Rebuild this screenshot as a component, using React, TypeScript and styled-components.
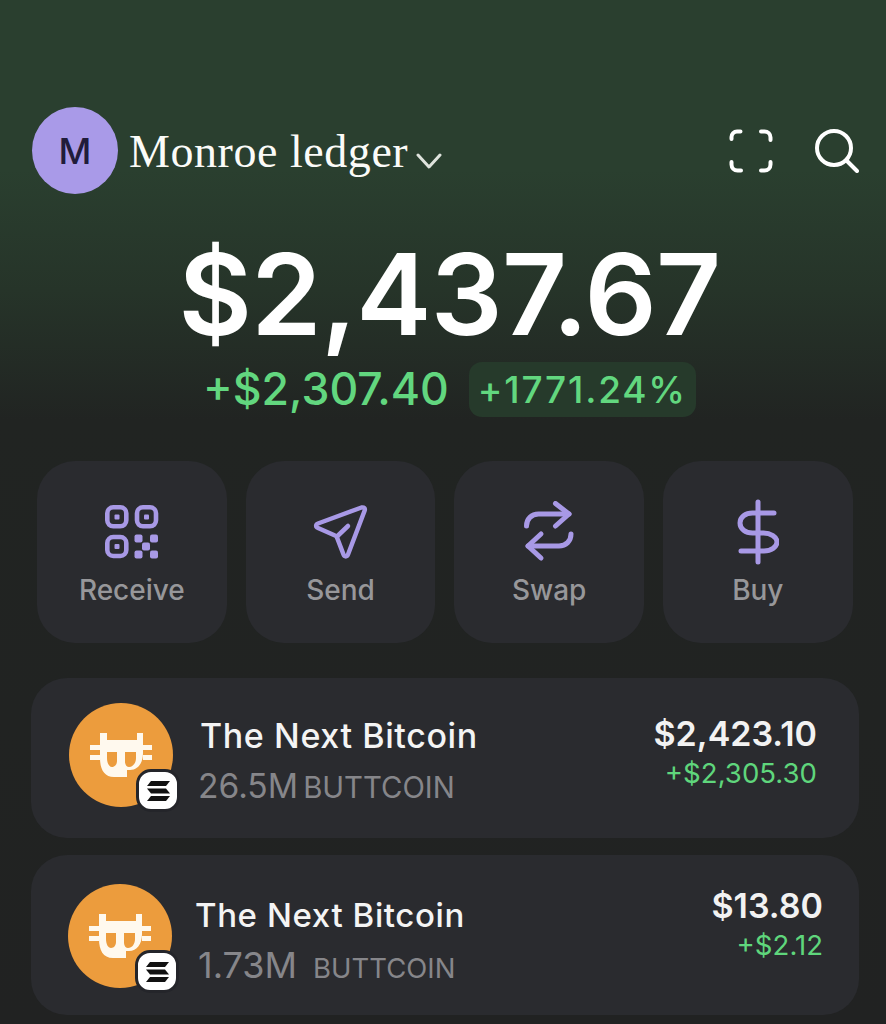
import React from "react";
import styled, { createGlobalStyle } from "styled-components";

const Global = createGlobalStyle`
  html, body { margin: 0; padding: 0; background: #212222; }
  * { box-sizing: border-box; }
`;

const Screen = styled.div`
  width: 886px;
  height: 1024px;
  overflow: hidden;
  font-family: Inter, "Liberation Sans", sans-serif;
  background: linear-gradient(180deg, #2a3f2f 0px, #2a3f2f 170px, #263429 290px, #212422 420px, #212222 1024px);
`;

const Header = styled.header`
  height: 194px;
  padding: 107px 27px 0 32px;
  display: flex;
  align-items: flex-start;
  justify-content: space-between;
`;

const Account = styled.div`
  display: flex;
  align-items: center;
`;

const Avatar = styled.div`
  width: 86px;
  height: 87px;
  border-radius: 50%;
  background: #a99ae8;
  color: #211c3a;
  font-size: 36px;
  font-weight: 500;
  display: flex;
  align-items: center;
  justify-content: center;
`;

const AccountName = styled.div`
  margin: 3px 0 0 11px;
  font-family: "Liberation Serif", serif;
  font-size: 46px;
  letter-spacing: 0.55px;
  color: #fbfbf8;
  line-height: 1;
`;

const Chevron = styled.svg`
  margin: 20px 0 0 8px;
`;

const HeaderIcons = styled.div`
  display: flex;
  align-items: center;
  gap: 42px;
  padding-top: 22px;
`;

const Balance = styled.div`
  margin-top: 42px;
  padding-left: 13px;
  text-align: center;
  font-size: 113px;
  line-height: 116px;
  font-weight: 600;
  color: #fff;
  letter-spacing: -0.7px;
`;

const DeltaRow = styled.div`
  margin-top: 10px;
  display: flex;
  align-items: center;
  padding-left: 203px;
  gap: 20px;
`;

const Delta = styled.div`
  font-size: 44.6px;
  font-weight: 500;
  color: #62d77f;
  line-height: 55px;
`;

const Badge = styled.div`
  height: 55px;
  padding: 0 9px;
  border-radius: 13px;
  background: #263a2b;
  color: #62d77f;
  font-size: 37px;
  letter-spacing: 1.8px;
  font-weight: 500;
  line-height: 55px;
`;

const Actions = styled.div`
  margin-top: 44px;
  padding: 0 33px 0 37px;
  display: grid;
  grid-template-columns: repeat(4, 189.67px);
  column-gap: 19px;
`;

const ActionCard = styled.div`
  height: 182px;
  border-radius: 38px;
  background: #2a2b2f;
  display: flex;
  flex-direction: column;
  align-items: center;
  padding-top: 36px;
`;

const ActionIcon = styled.div`
  height: 70px;
  display: flex;
  align-items: center;
  justify-content: center;
`;

const ActionLabel = styled.div`
  margin-top: 6px;
  font-size: 28px;
  line-height: 34px;
  font-weight: 500;
  color: #97979a;
`;

const Tokens = styled.div`
  margin-top: 35px;
  padding: 0 27px 0 31px;
  display: flex;
  flex-direction: column;
  gap: 17px;
`;

const TokenRow = styled.div<{ $left: number; $right: number }>`
  height: 160px;
  border-radius: 36px;
  background: #2a2b2f;
  display: flex;
  align-items: flex-start;
  padding: 0 ${(p) => p.$right}px 0 ${(p) => p.$left}px;
`;

const TokenLogo = styled.div<{ $top: number }>`
  position: relative;
  width: 104px;
  height: 104px;
  margin-top: ${(p) => p.$top}px;
  flex: none;
  border-radius: 50%;
  background: #ec9c3d;
  display: flex;
  align-items: center;
  justify-content: center;
`;

const ChainBadge = styled.div`
  position: absolute;
  right: -7px;
  bottom: -5px;
  width: 44px;
  height: 43px;
  border-radius: 15px;
  background: #fff;
  border: 3px solid #24252a;
  display: flex;
  align-items: center;
  justify-content: center;
`;

const TokenInfo = styled.div<{ $indent: number; $top: number }>`
  margin-left: ${(p) => p.$indent}px;
  padding-top: ${(p) => p.$top}px;
  flex: 1;
`;

const TokenName = styled.div<{ $size: number }>`
  font-size: ${(p) => p.$size}px;
  line-height: 40px;
  font-weight: 500;
  color: #f4f4f4;
  letter-spacing: 0.6px;
`;

const TokenAmountRow = styled.div<{ $gap: number; $shift: number }>`
  margin-top: 11px;
  margin-left: ${(p) => p.$shift}px;
  display: flex;
  align-items: baseline;
  gap: ${(p) => p.$gap}px;
  color: #86868a;
`;

const Amount = styled.span<{ $size: number }>`
  font-size: ${(p) => p.$size}px;
  line-height: 38px;
`;

const Ticker = styled.span<{ $size: number }>`
  font-size: ${(p) => p.$size}px;
`;

const TokenValues = styled.div<{ $top: number }>`
  display: flex;
  flex-direction: column;
  align-items: flex-end;
  padding-top: ${(p) => p.$top}px;
`;

const Value = styled.div`
  font-size: 34px;
  line-height: 40px;
  font-weight: 600;
  color: #f2f2f2;
`;

const Gain = styled.div`
  margin-top: 1px;
  font-size: 27.6px;
  line-height: 36px;
  color: #5fd67c;
`;

const Stroke = { fill: "none", stroke: "#fff", strokeLinecap: "round", strokeLinejoin: "round" } as const;
const Purple = { fill: "none", stroke: "#a899e6", strokeLinecap: "round", strokeLinejoin: "round" } as const;

const ScanIcon = () => (
  <svg width="44" height="44" viewBox="0 0 44 44" {...Stroke} strokeWidth="4">
    <path d="M2.500 10V8a5.500 5.500 0 0 1 5.500-5.500h3.500" />
    <path d="M32 2.500h3.500A6 6 0 0 1 41.500 8.500V11" />
    <path d="M2.500 33v2.500A6 6 0 0 0 8.500 41.500H12" />
    <path d="M41.500 33v2.500a6 6 0 0 1-6 6H32" />
  </svg>
);

const SearchIcon = () => (
  <svg width="44" height="44" viewBox="0 0 44 44" {...Stroke} strokeWidth="4">
    <circle cx="19" cy="19" r="17" />
    <path d="M31.500 31.500 42 42" />
  </svg>
);

const QrIcon = () => (
  <svg width="54" height="54" viewBox="0 0 54 54">
    <g {...Purple} strokeWidth="4.600">
      <rect x="2.300" y="2.300" width="19" height="19" rx="6" />
      <rect x="32" y="2.300" width="19" height="19" rx="6" />
      <rect x="2.300" y="32" width="19" height="19" rx="6" />
    </g>
    <g fill="#a899e6">
      <rect x="9.500" y="9.500" width="5" height="5" rx="1" />
      <rect x="39" y="9.500" width="5" height="5" rx="1" />
      <rect x="9.500" y="39" width="5" height="5" rx="1" />
      <rect x="29.500" y="29.500" width="8" height="8" rx="2" />
      <rect x="45" y="29.500" width="8" height="8" rx="2" />
      <rect x="37" y="37.500" width="8" height="8" rx="2" />
      <rect x="29.500" y="45.500" width="8" height="8" rx="2" />
      <rect x="45" y="45.500" width="8" height="8" rx="2" />
    </g>
  </svg>
);

const SendIcon = () => (
  <svg width="56" height="56" viewBox="0 0 56 56" {...Purple} strokeWidth="4.500">
    <path d="M49.500 3.500 6 19.500c-2.500 1-2.500 3.500 0 4.500l17 7.500c1 .4 1.500 1 2 2l6.500 17c1 2.500 3.500 2.500 4.500 0L52.500 7c1-2.500-.5-4-3-3.500Z" />
    <path d="M25 32.500 36 22" />
  </svg>
);

const SwapIcon = () => (
  <svg width="50" height="62" viewBox="0 0 50 62" {...Purple} strokeWidth="5">
    <path d="M2.500 25c0-7 5-12 12-12H45" />
    <path d="M31.500 2.500 45 13 31.500 25" />
    <path d="M47 33c0 7-5 12-12 12H4" />
    <path d="M17 33 4 45l13 12" />
  </svg>
);

const DollarIcon = () => (
  <svg width="42" height="66" viewBox="0 0 42 66" {...Purple} strokeWidth="5">
    <path d="M21 3v60" />
    <path d="M37 14H15.500C8.500 14 3 18 3 24s5.500 10 12.500 10h11C33.500 34 40 38 40 43s-6 9-13 9H4" />
  </svg>
);

const CoinMark = () => (
  <svg width="62" height="44" viewBox="0 0 62 44">
    <g fill="#fff9ee">
      <path d="M10 0h7v7h30V0h6v20c0 10-5 17-13 17h-3v7H24C14 44 10 36 10 25Z" />
      <rect x="0" y="12" width="10" height="5" />
      <rect x="0" y="22" width="10" height="5" />
      <rect x="53" y="12" width="9" height="5" />
      <rect x="53" y="22" width="9" height="5" />
    </g>
    <g fill="#ec9c3d">
      <path d="M17 19h10v9c0 3-2 6-5 6s-5-4-5-9Z" />
      <path d="M35 19h11v6c0 5-3 9-7 9-2 0-4-2-4-5Z" />
    </g>
  </svg>
);

const SolanaMark = () => (
  <svg width="23" height="20" viewBox="0 0 23 20" fill="#111">
    <path d="M4 0h19l-4 5H0Z" />
    <path d="M0 7.500h19l4 5H4Z" />
    <path d="M4 15h19l-4 5H0Z" />
  </svg>
);

const actions = [
  { label: "Receive", icon: <QrIcon /> },
  { label: "Send", icon: <SendIcon /> },
  { label: "Swap", icon: <SwapIcon /> },
  { label: "Buy", icon: <DollarIcon /> },
];

const tokens = [
  { amount: "26.5M", value: "$2,423.10", gain: "+$2,305.30", left: 38, right: 42, logoTop: 25, indent: 27, nameTop: 38, name: 34, amountSize: 33.6, tickerSize: 29.3, gap: 5, shift: -2, top: 36 },
  { amount: "1.73M", value: "$13.80", gain: "+$2.12", left: 37, right: 36, logoTop: 29, indent: 23, nameTop: 40, name: 33, amountSize: 36, tickerSize: 27.5, gap: 16, shift: 3, top: 31 },
];

export default function App() {
  return (
    <Screen>
      <Global />
      <Header>
        <Account>
          <Avatar>M</Avatar>
          <AccountName>Monroe ledger</AccountName>
          <Chevron width="26" height="18" viewBox="0 0 26 18" fill="none" stroke="#dfe3dd" strokeLinecap="round" strokeLinejoin="round" strokeWidth="3">
            <path d="M2 3l11 12L24 3" />
          </Chevron>
        </Account>
        <HeaderIcons>
          <ScanIcon />
          <SearchIcon />
        </HeaderIcons>
      </Header>
      <Balance>$2,437.67</Balance>
      <DeltaRow>
        <Delta>+$2,307.40</Delta>
        <Badge>+1771.24%</Badge>
      </DeltaRow>
      <Actions>
        {actions.map((a) => (
          <ActionCard key={a.label}>
            <ActionIcon>{a.icon}</ActionIcon>
            <ActionLabel>{a.label}</ActionLabel>
          </ActionCard>
        ))}
      </Actions>
      <Tokens>
        {tokens.map((t) => (
          <TokenRow key={t.amount} $left={t.left} $right={t.right}>
            <TokenLogo $top={t.logoTop}>
              <CoinMark />
              <ChainBadge>
                <SolanaMark />
              </ChainBadge>
            </TokenLogo>
            <TokenInfo $indent={t.indent} $top={t.nameTop}>
              <TokenName $size={t.name}>The Next Bitcoin</TokenName>
              <TokenAmountRow $gap={t.gap} $shift={t.shift}>
                <Amount $size={t.amountSize}>{t.amount}</Amount>
                <Ticker $size={t.tickerSize}>BUTTCOIN</Ticker>
              </TokenAmountRow>
            </TokenInfo>
            <TokenValues $top={t.top}>
              <Value>{t.value}</Value>
              <Gain>{t.gain}</Gain>
            </TokenValues>
          </TokenRow>
        ))}
      </Tokens>
    </Screen>
  );
}
